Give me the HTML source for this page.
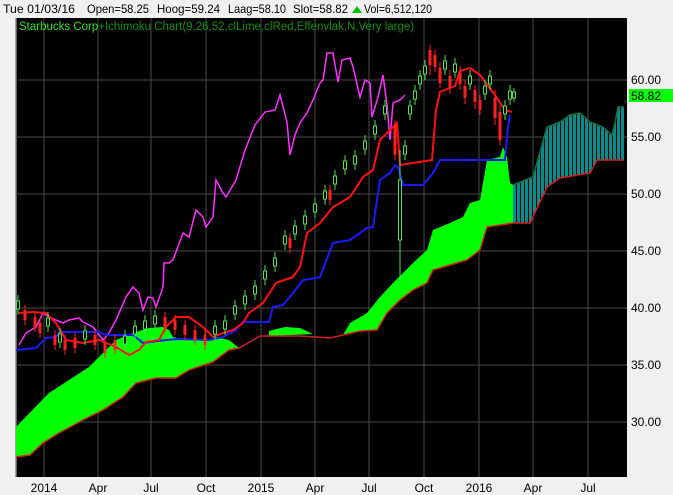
<!DOCTYPE html>
<html><head><style>
body{margin:0;width:673px;height:495px;background:#f0f0f0;overflow:hidden;font-family:"Liberation Sans",Arial,sans-serif;}
svg{position:absolute;left:0;top:0}
</style></head><body>
<svg width="673" height="495" viewBox="0 0 673 495" xmlns="http://www.w3.org/2000/svg" font-family="Liberation Sans, Arial, sans-serif">
<defs>
<pattern id="st" width="4" height="10" patternUnits="userSpaceOnUse" x="513"><rect width="3" height="10" fill="#0a8a8a"/><rect x="3" width="1" height="10" fill="#000"/></pattern>
</defs>
<rect x="0" y="0" width="673" height="495" fill="#f0f0f0"/>
<g font-size="12" fill="#000">
<text x="3" y="13" textLength="72" lengthAdjust="spacingAndGlyphs">Tue 01/03/16</text>
<text x="87" y="13" textLength="62" lengthAdjust="spacingAndGlyphs">Open=58.25</text>
<text x="157" y="13" textLength="63" lengthAdjust="spacingAndGlyphs">Hoog=59.24</text>
<text x="228" y="13" textLength="58" lengthAdjust="spacingAndGlyphs">Laag=58.10</text>
<text x="293" y="13" textLength="55" lengthAdjust="spacingAndGlyphs">Slot=58.82</text>
<text x="364" y="13" textLength="68" lengthAdjust="spacingAndGlyphs">Vol=6,512,120</text>
</g>
<polygon points="352,13 357,6 362,13" fill="#00c000"/>
<rect x="16" y="18" width="611" height="459" fill="#000"/>
<line x1="16" y1="18" x2="16" y2="477" stroke="#888" stroke-width="1.5"/>
<g stroke="#4a4a4a" stroke-width="1">
<path d="M44 18V477M98 18V477M151 18V477M206 18V477M261 18V477M315 18V477M369 18V477M424 18V477M479 18V477M533 18V477M588 18V477"/>
<path d="M16 80H627M16 137H627M16 194H627M16 251H627M16 308H627M16 365H627M16 422H627"/>
</g>
<polygon fill="#00ff00" points="16,427 49,393 89,367 96,360 116,340 133,333 149,328 163,327 169,330 173,337 183,340 209,340 216,337 229,340 239,348 229,350 213,362 189,370 176,378 156,378 136,383 123,397 103,410 83,420 59,433 43,443 30,455 16,457"/>
<polygon fill="#00ff00" points="269,331 285,327 300,328 313,334 269,336"/>
<polygon fill="#00ff00" points="343,335 350,323 367,313 380,297 393,283 413,263 427,250 433,230 450,223 463,217 470,203 480,200 487,160 500,157 503,147 507,157 510,183 513,185 513,223 487,227 480,250 467,260 450,265 433,270 427,283 413,290 400,300 387,313 377,330 360,331"/>
<polygon fill="url(#st)" points="513,185 533,177 547,127 560,122 570,115 580,113 590,122 603,127 612,135 615,123 618,107 624,107 624,160 597,160 590,173 560,178 547,187 530,223 513,223"/>
<polyline fill="none" stroke="#1d6b3a" stroke-width="1.5" points="513,185 533,177 547,127 560,122 570,115 580,113 590,122 603,127 612,135 615,123 618,107 624,107"/>
<polyline fill="none" stroke="#d02020" stroke-width="1.5" points="16,457 30,455 43,443 59,433 83,420 103,410 123,397 136,383 156,378 176,378 189,370 213,362 229,350 239,348 260,336 300,336 330,338 343,335 360,331 377,330 387,313 400,300 413,290 427,283 433,270 450,265 467,260 480,250 487,227 513,223 530,223 547,187 560,178 590,173 597,160 624,160"/>
<polyline fill="none" stroke="#ff30ff" stroke-width="1.5" points="19,345 26,333 36,327 43,313 49,317 56,320 63,323 69,320 79,318 83,322 93,327 103,340 109,333 116,320 126,297 133,287 139,293 143,310 148,297 153,298 156,307 163,287 164,263 169,263 173,260 183,233 189,237 196,210 203,217 206,227 213,217 216,180 223,193 226,197 236,180 245,150 255,125 265,112 275,110 280,95 287,122 290,155 295,135 300,123 307,113 313,100 320,83 323,80 327,53 333,53 338,82 342,60 350,58 353,67 360,97 365,80 370,83 372,117 378,97 383,75 387,105 390,140 393,103 400,100 405,95"/>
<polyline fill="none" stroke="#1a1aff" stroke-width="2" points="16,350 36,348 46,338 56,337 59,332 99,332 106,335 133,335 143,343 166,340 179,339 209,340 223,337 236,330 243,322 269,322 273,307 283,305 293,293 303,280 316,278 320,277 333,243 350,240 367,228 373,227 380,180 390,173 395,165 398,167 403,185 423,185 433,173 440,160 505,160 508,127 510,115"/>
<polyline fill="none" stroke="#ff1010" stroke-width="2" points="19,313 33,312 46,313 56,323 66,340 83,343 99,340 116,347 129,355 139,350 146,342 159,340 166,327 176,317 189,317 203,327 213,337 223,333 233,330 243,323 249,313 263,303 276,283 293,277 300,267 307,233 320,223 333,207 350,197 363,177 373,170 380,140 390,130 397,123 400,165 432,160 436,110 440,92 455,86 460,71 470,68 480,75 495,95 505,110 512,112"/>
<path fill="none" stroke="#50e050" stroke-width="1" d="M18 295V315M48 312V332M60 328V348M85 325V345M125 330V350M135 320V340M145 315V335M155 310V330M215 320V340M225 315V335M235 300V320M245 290V310M255 280V300M265 265V285M275 252V272M285 230V250M295 220V240M305 210V230M315 198V218M325 185V205M335 170V190M345 155V175M355 150V170M365 135V155M375 120V140M385 100V120M400 150V282M405 140V160M410 100V120M415 85V105M420 70V90M425 60V80M445 55V75M455 58V78M470 70V90M485 80V100M490 70V90M505 100V120M510 85V105M514 88V102"/>
<path fill="#000" stroke="#50e050" stroke-width="1" d="M16.5 301h3v8h-3zM46.5 318h3v8h-3zM58.5 334h3v8h-3zM83.5 331h3v8h-3zM123.5 336h3v8h-3zM133.5 326h3v8h-3zM143.5 321h3v8h-3zM153.5 316h3v8h-3zM213.5 326h3v8h-3zM223.5 321h3v8h-3zM233.5 306h3v8h-3zM243.5 296h3v8h-3zM253.5 286h3v8h-3zM263.5 271h3v8h-3zM273.5 258h3v8h-3zM283.5 236h3v8h-3zM293.5 226h3v8h-3zM303.5 216h3v8h-3zM313.5 204h3v8h-3zM323.5 191h3v8h-3zM333.5 176h3v8h-3zM343.5 161h3v8h-3zM353.5 156h3v8h-3zM363.5 141h3v8h-3zM373.5 126h3v8h-3zM383.5 106h3v8h-3zM398.5 180h3v60h-3zM403.5 146h3v8h-3zM408.5 106h3v8h-3zM413.5 91h3v8h-3zM418.5 76h3v8h-3zM423.5 66h3v8h-3zM443.5 61h3v8h-3zM453.5 64h3v8h-3zM468.5 76h3v8h-3zM483.5 86h3v8h-3zM488.5 76h3v8h-3zM503.5 106h3v8h-3zM508.5 91h3v8h-3zM512.5 92h3v6h-3z"/>
<path fill="none" stroke="#ff2020" stroke-width="1" d="M25 305V325M35 312V332M40 318V338M55 330V350M65 335V355M75 333V353M95 330V350M105 338V358M115 335V355M165 312V332M175 315V335M185 320V340M195 325V345M205 330V350M290 233V253M330 185V205M395 120V160M430 45V75M435 50V72M440 62V88M450 70V94M460 66V90M465 80V104M475 85V109M480 95V115M495 90V125M500 105V145"/>
<path fill="#ff2020" d="M23.5 310h3v10h-3zM33.5 317h3v10h-3zM38.5 323h3v10h-3zM53.5 335h3v10h-3zM63.5 340h3v10h-3zM73.5 338h3v10h-3zM93.5 335h3v10h-3zM103.5 343h3v10h-3zM113.5 340h3v10h-3zM163.5 317h3v10h-3zM173.5 320h3v10h-3zM183.5 325h3v10h-3zM193.5 330h3v10h-3zM203.5 335h3v10h-3zM288.5 238h3v10h-3zM328.5 190h3v10h-3zM393.5 125h3v30h-3zM428.5 50h3v15h-3zM433.5 55h3v12h-3zM438.5 68h3v15h-3zM448.5 76h3v12h-3zM458.5 72h3v12h-3zM463.5 86h3v12h-3zM473.5 90h3v12h-3zM478.5 100h3v10h-3zM493.5 98h3v20h-3zM498.5 112h3v28h-3z"/>
<text x="19" y="30" font-size="11.5" fill="#30e030">Starbucks Corp<tspan fill="#109010">+Ichimoku Chart(9,26,52,clLime,clRed,Effenvlak,N,Very large)</tspan></text>
<rect x="627" y="18" width="46" height="477" fill="#f0f0f0"/>
<rect x="16" y="477" width="657" height="18" fill="#f0f0f0"/>
<g font-size="12" fill="#000">
<text x="631" y="84">60.00</text>
<text x="631" y="141">55.00</text>
<text x="631" y="198">50.00</text>
<text x="631" y="255">45.00</text>
<text x="631" y="312">40.00</text>
<text x="631" y="369">35.00</text>
<text x="631" y="426">30.00</text>
</g>
<rect x="629" y="89" width="44" height="13" fill="#00ff00"/>
<text x="631" y="100" font-size="12" fill="#000">58.82</text>
<g font-size="12" fill="#000" text-anchor="middle">
<text x="44" y="492">2014</text><text x="98" y="492">Apr</text><text x="151" y="492">Jul</text><text x="206" y="492">Oct</text><text x="261" y="492">2015</text><text x="315" y="492">Apr</text><text x="369" y="492">Jul</text><text x="424" y="492">Oct</text><text x="479" y="492">2016</text><text x="533" y="492">Apr</text><text x="588" y="492">Jul</text>
</g>
</svg>
</body></html>
